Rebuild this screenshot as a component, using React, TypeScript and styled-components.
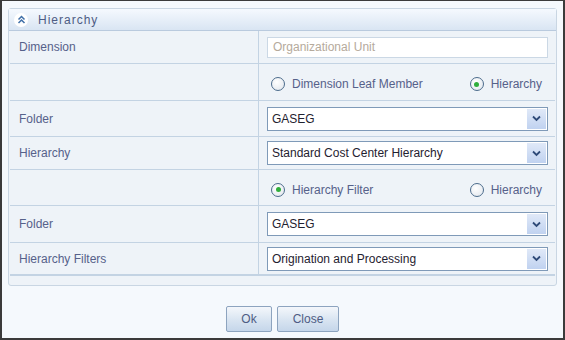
import * as React from "react";
import styled, { createGlobalStyle } from "styled-components";

const GlobalStyle = createGlobalStyle`
    html, body {
        margin: 0;
        padding: 0;
        background: #ffffff;
    }
    body {
        font-family: "Liberation Sans", Arial, sans-serif;
        font-size: 12px;
    }
`

const Frame = styled.div`
    width: 565px;
    height: 340px;
    box-sizing: border-box;
    border: 2px solid #3b3b3b;
    border-top-width: 1px;
    background: #f5f9fd;
    padding: 7px 6px 0 6px;
    display: flex;
    flex-direction: column;
`

const Panel = styled.div`
    border: 1px solid #c9d6e3;
    border-radius: 3px;
    background: #eef3f8;
    padding-bottom: 9px;
`

const PanelHeader = styled.div`
    height: 21px;
    display: flex;
    align-items: center;
    gap: 10px;
    padding-left: 5px;
    background: linear-gradient(#f5f9fe, #d9e5f3);
    border-bottom: 1px solid #b9cade;
`

const CollapseIcon = styled.span`
    width: 14px;
    height: 14px;
    border-radius: 50%;
    background: #ffffff;
    display: flex;
    align-items: center;
    justify-content: center;
`

const PanelTitle = styled.span`
    color: #4e5c84;
    font-size: 12px;
    letter-spacing: 1px;
`

const Grid = styled.div`
    display: grid;
    grid-template-columns: 249px 1fr;
    margin: 0 1px;
    border-bottom: 1px solid #c3d3e3;
`

const LabelCell = styled.div<{ $h: number }>`
    height: ${p => p.$h}px;
    box-sizing: border-box;
    display: flex;
    align-items: center;
    padding-left: 9px;
    color: #56618a;
    border-bottom: 1px solid #c3d3e3;
    border-right: 1px solid #c3d3e3;
`

const ValueCell = styled.div<{ $h: number }>`
    height: ${p => p.$h}px;
    box-sizing: border-box;
    display: flex;
    align-items: center;
    padding: 0 7px 0 8px;
    border-bottom: 1px solid #c3d3e3;
`

const RadioCell = styled(ValueCell)`
    justify-content: space-between;
    padding: 4px 13px 0 12px;
`

const DisabledInput = styled.div`
    flex: 1;
    height: 21px;
    box-sizing: border-box;
    border: 1px solid #cbd8e5;
    background: #ffffff;
    display: flex;
    align-items: center;
    padding-left: 5px;
    color: #b5aa9c;
`

const SelectBox = styled.div`
    flex: 1;
    height: 24px;
    box-sizing: border-box;
    border: 1px solid #7f9ab8;
    background: #ffffff;
    display: flex;
    align-items: center;
    padding: 1px;
`

const SelectText = styled.span`
    flex: 1;
    padding-left: 3px;
    color: #1f2230;
`

const SelectArrow = styled.span`
    width: 19px;
    height: 100%;
    background: linear-gradient(#e0e9f8, #c0d2f0);
    display: flex;
    align-items: center;
    justify-content: center;
`

const RadioOption = styled.label`
    display: flex;
    align-items: center;
    gap: 7px;
    color: #56618a;
`

const RadioCircle = styled.span<{ $checked?: boolean }>`
    width: 14px;
    height: 14px;
    box-sizing: border-box;
    border-radius: 50%;
    border: 1.5px solid #4c6c8c;
    background: radial-gradient(circle at 40% 35%, #ffffff, #dfe5ec);
    display: flex;
    align-items: center;
    justify-content: center;
    &::after {
        content: "";
        display: ${p => (p.$checked ? "block" : "none")};
        width: 5px;
        height: 5px;
        border-radius: 50%;
        background: #2fae3c;
    }
`

const Footer = styled.div`
    display: flex;
    justify-content: center;
    gap: 5px;
    padding-top: 20px;
`

const Button = styled.button<{ $w: number }>`
    width: ${p => p.$w}px;
    height: 26px;
    border: 1px solid #8da4bf;
    border-radius: 2px;
    background: linear-gradient(#f4f7fb, #d8e4f1 55%, #c5d6ea);
    color: #4e5c84;
    font-family: "Liberation Sans", Arial, sans-serif;
    font-size: 12px;
    padding: 0;
`

const Chevron = () => (
    <svg width="9" height="7" viewBox="0 0 9 7">
        <path d="M1 1.5 L4.5 5 L8 1.5" fill="none" stroke="#2e4a78" strokeWidth="1.8" />
    </svg>
)

const DoubleUp = () => (
    <svg width="9" height="9" viewBox="0 0 9 9">
        <path d="M1.5 4.5 L4.5 1.5 L7.5 4.5 M1.5 8 L4.5 5 L7.5 8" fill="none" stroke="#3f6fa8" strokeWidth="1.5" />
    </svg>
)

const Select = ({ value }: { value: string }) => (
    <SelectBox>
        <SelectText>{value}</SelectText>
        <SelectArrow>
            <Chevron />
        </SelectArrow>
    </SelectBox>
)

const Radio = ({ label, checked }: { label: string; checked?: boolean }) => (
    <RadioOption>
        <RadioCircle $checked={checked} />
        {label}
    </RadioOption>
)

export default function App() {
    return (
        <React.Fragment>
            <GlobalStyle />
            <Frame>
                <Panel>
                    <PanelHeader>
                        <CollapseIcon>
                            <DoubleUp />
                        </CollapseIcon>
                        <PanelTitle>Hierarchy</PanelTitle>
                    </PanelHeader>
                    <Grid>
                        <LabelCell $h={33}>Dimension</LabelCell>
                        <ValueCell $h={33}>
                            <DisabledInput>Organizational Unit</DisabledInput>
                        </ValueCell>

                        <LabelCell $h={37} />
                        <RadioCell $h={37}>
                            <Radio label="Dimension Leaf Member" />
                            <Radio label="Hierarchy" checked />
                        </RadioCell>

                        <LabelCell $h={36}>Folder</LabelCell>
                        <ValueCell $h={36}>
                            <Select value="GASEG" />
                        </ValueCell>

                        <LabelCell $h={33}>Hierarchy</LabelCell>
                        <ValueCell $h={33}>
                            <Select value="Standard Cost Center Hierarchy" />
                        </ValueCell>

                        <LabelCell $h={36} />
                        <RadioCell $h={36}>
                            <Radio label="Hierarchy Filter" checked />
                            <Radio label="Hierarchy" />
                        </RadioCell>

                        <LabelCell $h={37}>Folder</LabelCell>
                        <ValueCell $h={37}>
                            <Select value="GASEG" />
                        </ValueCell>

                        <LabelCell $h={32}>Hierarchy Filters</LabelCell>
                        <ValueCell $h={32}>
                            <Select value="Origination and Processing" />
                        </ValueCell>
                    </Grid>
                </Panel>
                <Footer>
                    <Button $w={46}>Ok</Button>
                    <Button $w={62}>Close</Button>
                </Footer>
            </Frame>
        </React.Fragment>
    )
}
